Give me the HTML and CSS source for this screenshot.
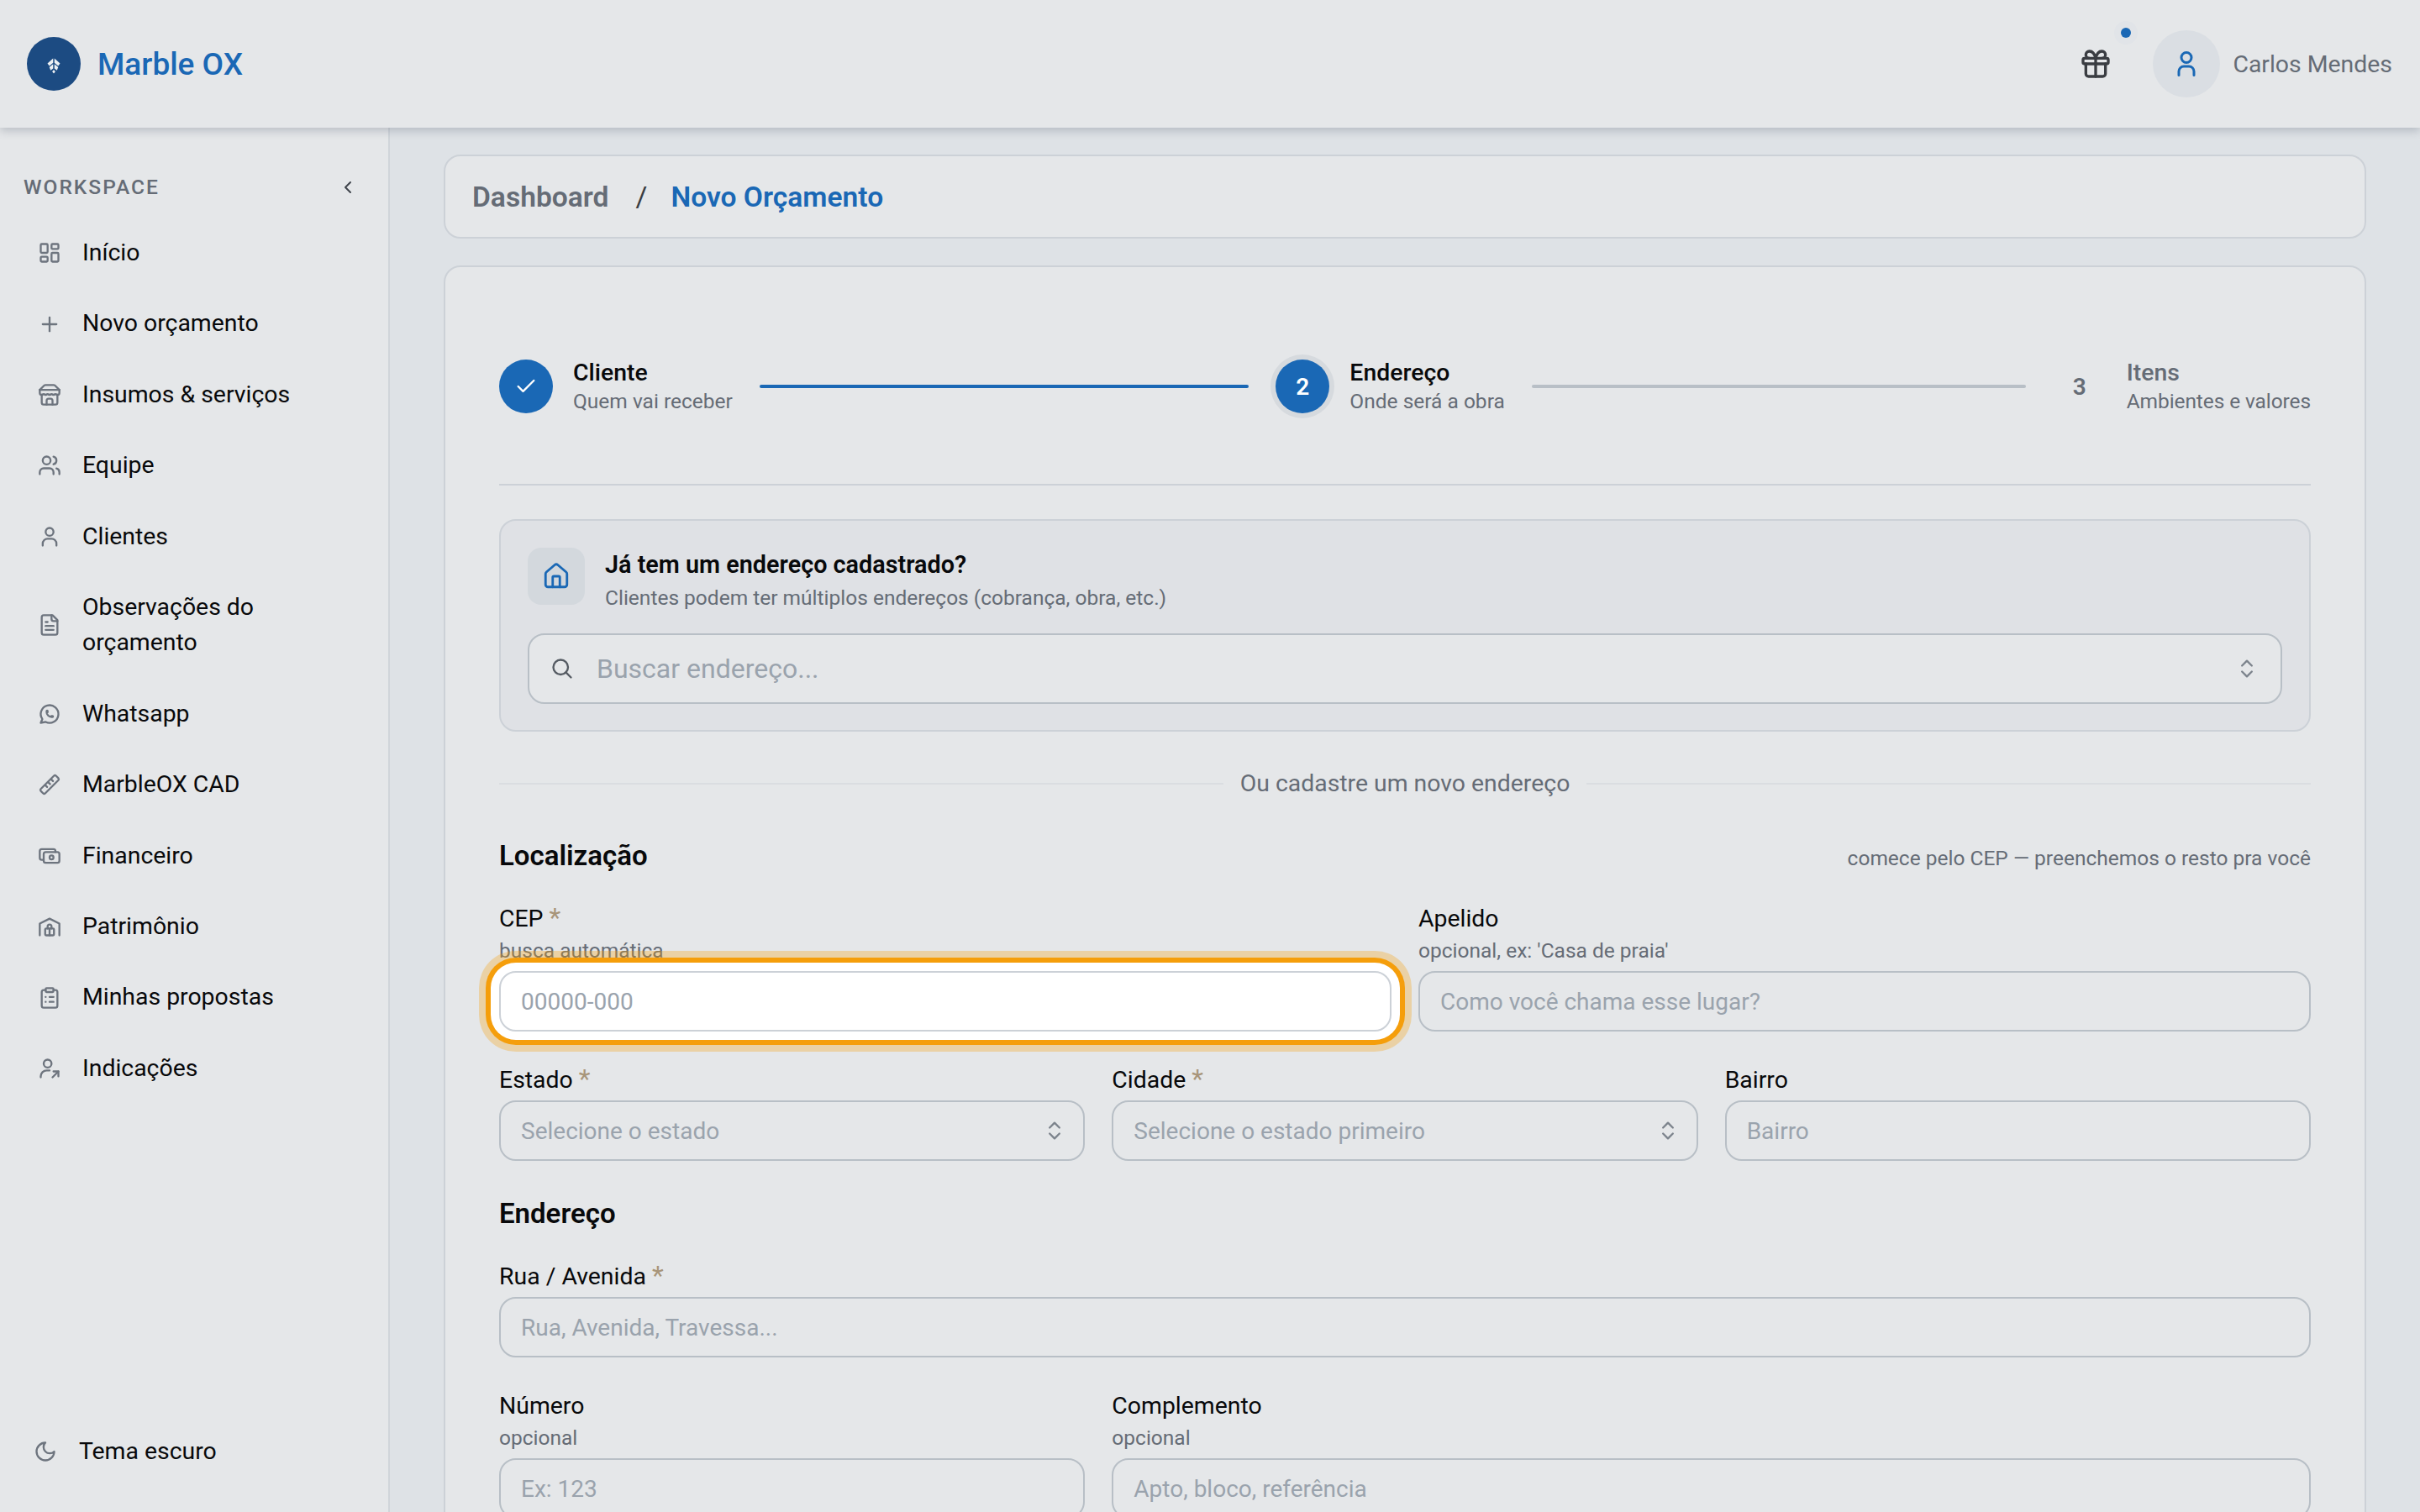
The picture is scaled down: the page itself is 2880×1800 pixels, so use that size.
FILE: index.html
```html
<!doctype html>
<html lang="pt-BR">
<head>
<meta charset="utf-8">
<title>Novo Orçamento - Marble OX</title>
<link rel="stylesheet" href="styles.css">
</head>

<body>
<header class="topbar">
	<div class="brand">
		<span class="brand-logo">
			<svg viewBox="0 0 24 28" fill="#eef1f4"><path d="M11 2 2 10l3 4 6-5Z"/><path d="m13 2 9 8-3 4-6-5Z"/><path d="M11 11l-6 5 2 5 4-3Z"/><path d="m13 11 6 5-2 5-4-3Z"/><path d="m12 20 2.500 3-2.500 3-2.500-3Z"/></svg>
		</span>
		<span class="brand-name">Marble OX</span>
	</div>
	<div class="topbar-right">
		<span class="gift">
			<svg class="icon" viewBox="0 0 24 24"><rect x="3" y="8" width="18" height="4" rx="1"/><path d="M12 8v13"/><path d="M19 12v7a2 2 0 0 1-2 2H7a2 2 0 0 1-2-2v-7"/><path d="M7.5 8a2.5 2.5 0 0 1 0-5A4.8 8 0 0 1 12 8a4.8 8 0 0 1 4.5-5 2.5 2.5 0 0 1 0 5"/></svg>
			<i class="gift-dot"></i>
		</span>
		<span class="avatar">
			<svg class="icon" viewBox="0 0 24 24"><circle cx="12" cy="7" r="4"/><path d="M6 21v-3a4 4 0 0 1 4-4h4a4 4 0 0 1 4 4v3"/></svg>
		</span>
		<span class="user-name">Carlos Mendes</span>
	</div>
</header>

<div class="layout">
	<aside class="sidebar">
		<div class="side-head">
			<span class="side-title">WORKSPACE</span>
			<svg class="icon" viewBox="0 0 24 24"><path d="m15 18-6-6 6-6"/></svg>
		</div>
		<nav class="side-nav">
			<a class="nav-item"><svg class="icon" viewBox="0 0 24 24"><rect x="3" y="3" width="7" height="9" rx="1"/><rect x="14" y="3" width="7" height="5" rx="1"/><rect x="14" y="12" width="7" height="9" rx="1"/><rect x="3" y="16" width="7" height="5" rx="1"/></svg>Início</a>
			<a class="nav-item"><svg class="icon" viewBox="0 0 24 24"><path d="M5 12h14"/><path d="M12 5v14"/></svg>Novo orçamento</a>
			<a class="nav-item"><svg class="icon" viewBox="0 0 24 24"><path d="m2 7 4.41-4.41A2 2 0 0 1 7.83 2h8.34a2 2 0 0 1 1.42.59L22 7"/><path d="M4 12v8a2 2 0 0 0 2 2h12a2 2 0 0 0 2-2v-8"/><path d="M15 22v-4a2 2 0 0 0-2-2h-2a2 2 0 0 0-2 2v4"/><path d="M2 7h20"/><path d="M22 7v3a2 2 0 0 1-2 2 2.7 2.7 0 0 1-1.59-.63.7.7 0 0 0-.82 0A2.7 2.7 0 0 1 16 12a2.7 2.7 0 0 1-1.59-.63.7.7 0 0 0-.82 0A2.7 2.7 0 0 1 12 12a2.7 2.7 0 0 1-1.59-.63.7.7 0 0 0-.82 0A2.7 2.7 0 0 1 8 12a2.7 2.7 0 0 1-1.59-.63.7.7 0 0 0-.82 0A2.7 2.7 0 0 1 4 12a2 2 0 0 1-2-2V7"/></svg>Insumos &amp; serviços</a>
			<a class="nav-item"><svg class="icon" viewBox="0 0 24 24"><path d="M16 21v-2a4 4 0 0 0-4-4H6a4 4 0 0 0-4 4v2"/><circle cx="9" cy="7" r="4"/><path d="M22 21v-2a4 4 0 0 0-3-3.87"/><path d="M16 3.13a4 4 0 0 1 0 7.75"/></svg>Equipe</a>
			<a class="nav-item"><svg class="icon" viewBox="0 0 24 24"><circle cx="12" cy="7" r="4"/><path d="M5 21v-2a5 5 0 0 1 5-5h4a5 5 0 0 1 5 5v2"/></svg>Clientes</a>
			<a class="nav-item"><svg class="icon" viewBox="0 0 24 24"><path d="M15 2H6a2 2 0 0 0-2 2v16a2 2 0 0 0 2 2h12a2 2 0 0 0 2-2V7Z"/><path d="M14 2v4a2 2 0 0 0 2 2h4"/><path d="M16 13H8"/><path d="M16 17H8"/><path d="M10 9H8"/></svg>Observações do orçamento</a>
			<a class="nav-item"><svg class="icon" viewBox="0 0 24 24"><path d="m3 21 1.65-3.8a9 9 0 1 1 3.4 2.9L3 21"/><path d="M9 10a.5.5 0 0 0 1 0V9a.5.5 0 0 0-1 0v1a5 5 0 0 0 5 5h1a.5.5 0 0 0 0-1h-1a.5.5 0 0 0 0 1"/></svg>Whatsapp</a>
			<a class="nav-item"><svg class="icon" viewBox="0 0 24 24"><path d="M3 16.5 16.5 3a1.5 1.5 0 0 1 2 0L21 5.5a1.5 1.5 0 0 1 0 2L7.5 21a1.5 1.5 0 0 1-2 0L3 18.500a1.5 1.5 0 0 1 0-2Z"/><path d="m7.500 12.500 2 2"/><path d="m10.500 9.500 2 2"/><path d="m13.500 6.500 2 2"/></svg>MarbleOX CAD</a>
			<a class="nav-item"><svg class="icon" viewBox="0 0 24 24"><rect x="6" y="8" width="16" height="11" rx="2"/><circle cx="14" cy="13.500" r="2"/><path d="M18 8V7a2 2 0 0 0-2-2H4a2 2 0 0 0-2 2v7a2 2 0 0 0 2 2h2"/></svg>Financeiro</a>
			<a class="nav-item"><svg class="icon" viewBox="0 0 24 24"><path d="M2 21V9l10-5 10 5v12"/><rect x="7.500" y="14" width="9" height="7" rx="1"/><path d="M10 14v-2a2 2 0 0 1 4 0v2"/><path d="M12 14v7"/></svg>Patrimônio</a>
			<a class="nav-item"><svg class="icon" viewBox="0 0 24 24"><rect x="8" y="2" width="8" height="4" rx="1"/><path d="M16 4h2a2 2 0 0 1 2 2v14a2 2 0 0 1-2 2H6a2 2 0 0 1-2-2V6a2 2 0 0 1 2-2h2"/><path d="M12 11h4"/><path d="M12 16h4"/><path d="M8 11h.01"/><path d="M8 16h.01"/></svg>Minhas propostas</a>
			<a class="nav-item"><svg class="icon" viewBox="0 0 24 24"><circle cx="10" cy="7" r="4"/><path d="M3 21v-1a6 6 0 0 1 6-6h3"/><path d="m15 21 6-6"/><path d="M16 15h5v5"/></svg>Indicações</a>
		</nav>
		<a class="theme-toggle"><svg class="icon" viewBox="0 0 24 24"><path d="M12 3a6 6 0 0 0 9 9 9 9 0 1 1-9-9Z"/></svg>Tema escuro</a>
	</aside>

	<main class="content">
		<div class="crumbs">
			<span class="crumb-link">Dashboard</span>
			<span class="crumb-sep">/</span>
			<span class="crumb-now">Novo Orçamento</span>
		</div>

		<section class="card">
			<div class="stepper">
				<div class="step">
					<span class="step-num done"><svg class="icon" viewBox="0 0 24 24"><path d="M20 6 9 17l-5-5"/></svg></span>
					<div>
						<div class="step-name">Cliente</div>
						<div class="step-sub">Quem vai receber</div>
					</div>
				</div>
				<span class="step-line on"></span>
				<div class="step">
					<span class="step-num now">2</span>
					<div>
						<div class="step-name">Endereço</div>
						<div class="step-sub">Onde será a obra</div>
					</div>
				</div>
				<span class="step-line"></span>
				<div class="step todo">
					<span class="step-num">3</span>
					<div>
						<div class="step-name">Itens</div>
						<div class="step-sub">Ambientes e valores</div>
					</div>
				</div>
			</div>

			<div class="saved">
				<div class="saved-head">
					<span class="saved-icon">
						<svg class="icon" viewBox="0 0 24 24"><path d="M15 21v-8a1 1 0 0 0-1-1h-4a1 1 0 0 0-1 1v8"/><path d="M3 10a2 2 0 0 1 .709-1.528l7-5.999a2 2 0 0 1 2.582 0l7 5.999A2 2 0 0 1 21 10v9a2 2 0 0 1-2 2H5a2 2 0 0 1-2-2z"/></svg>
					</span>
					<div>
						<div class="saved-title">Já tem um endereço cadastrado?</div>
						<div class="saved-sub">Clientes podem ter múltiplos endereços (cobrança, obra, etc.)</div>
					</div>
				</div>
				<div class="search">
					<svg class="icon" viewBox="0 0 24 24"><circle cx="10.500" cy="10.500" r="7.500"/><path d="m21 21-5.200-5.200"/></svg>
					<input class="search-input" type="text" placeholder="Buscar endereço...">
					<svg class="icon updown" viewBox="0 0 24 24"><path d="m7 15 5 5 5-5"/><path d="m7 9 5-5 5 5"/></svg>
				</div>
			</div>

			<div class="or-line"><span>Ou cadastre um novo endereço</span></div>

			<div class="sec-head">
				<h2 class="sec-title">Localização</h2>
				<span class="sec-note">comece pelo CEP — preenchemos o resto pra você</span>
			</div>
			<div class="row row-2">
				<div class="field">
					<label class="field-label">CEP <em>*</em></label>
					<span class="field-hint">busca automática</span>
					<input class="input input-tour" type="text" placeholder="00000-000">
				</div>
				<div class="field">
					<label class="field-label">Apelido</label>
					<span class="field-hint">opcional, ex: 'Casa de praia'</span>
					<input class="input" type="text" placeholder="Como você chama esse lugar?">
				</div>
			</div>
			<div class="row row-3">
				<div class="field">
					<label class="field-label">Estado <em>*</em></label>
					<div class="input select"><span>Selecione o estado</span><svg class="icon updown" viewBox="0 0 24 24"><path d="m7 15 5 5 5-5"/><path d="m7 9 5-5 5 5"/></svg></div>
				</div>
				<div class="field">
					<label class="field-label">Cidade <em>*</em></label>
					<div class="input select"><span>Selecione o estado primeiro</span><svg class="icon updown" viewBox="0 0 24 24"><path d="m7 15 5 5 5-5"/><path d="m7 9 5-5 5 5"/></svg></div>
				</div>
				<div class="field">
					<label class="field-label">Bairro</label>
					<input class="input" type="text" placeholder="Bairro">
				</div>
			</div>

			<div class="sec-head sec-second">
				<h2 class="sec-title">Endereço</h2>
			</div>
			<div class="row">
				<div class="field">
					<label class="field-label">Rua / Avenida <em>*</em></label>
					<input class="input" type="text" placeholder="Rua, Avenida, Travessa...">
				</div>
			</div>
			<div class="row row-3">
				<div class="field">
					<label class="field-label">Número</label>
					<span class="field-hint">opcional</span>
					<input class="input" type="text" placeholder="Ex: 123">
				</div>
				<div class="field span-2">
					<label class="field-label">Complemento</label>
					<span class="field-hint">opcional</span>
					<input class="input" type="text" placeholder="Apto, bloco, referência">
				</div>
			</div>
		</section>
	</main>
</div>
</body>
</html>
```

FILE: styles.css
```css
*{
	margin: 0;
	padding: 0;
	box-sizing: border-box;
}
html,body{
	height: 1800px;
	overflow: hidden;
}
body{
	background-color: #dee2e6;
	color: #08090b;
	font-family: Roboto, "Liberation Sans", sans-serif;
	font-size: 28.400px;
}
.icon{
	width: 28px;
	height: 28px;
	flex: none;
	fill: none;
	stroke: currentColor;
	stroke-width: 2;
	stroke-linecap: round;
	stroke-linejoin: round;
}

/* top bar */
.topbar{
	height: 152px;
	padding: 0 33px 0 32px;
	display: flex;
	align-items: center;
	justify-content: space-between;
	position: relative;
	z-index: 2;
	background-color: #e5e7e9;
	box-shadow: 0 4px 10px rgba(90,100,115,.3);
}
.brand{
	display: flex;
	align-items: center;
	gap: 20px;
}
.brand-logo{
	width: 64px;
	height: 64px;
	padding-top: 4px;
	display: flex;
	align-items: center;
	justify-content: center;
	border-radius: 50%;
	background-color: #1c4b82;
}
.brand-logo svg{
	width: 18px;
	height: 21px;
}
.brand-name{
	color: #1a68b5;
	font-size: 37px;
	font-weight: 500;
}
.topbar-right{
	display: flex;
	align-items: center;
}
.gift{
	width: 40px;
	height: 40px;
	margin-right: 48px;
	position: relative;
	color: #3a3d42;
}
.gift .icon{
	width: 40px;
	height: 40px;
}
.gift-dot{
	width: 12px;
	height: 12px;
	position: absolute;
	top: -23px;
	right: -22px;
	border-radius: 50%;
	background-color: #1a68b5;
	box-shadow: 0 0 0 8px #e1e4e8;
}
.avatar{
	width: 80px;
	height: 80px;
	margin-right: 15px;
	display: flex;
	align-items: center;
	justify-content: center;
	border-radius: 50%;
	background-color: #dadee3;
	color: #1a68b5;
}
.avatar .icon{
	width: 36px;
	height: 36px;
}
.user-name{
	color: #656c76;
}

/* sidebar */
.layout{
	height: 1648px;
	display: flex;
}
.sidebar{
	width: 464px;
	flex: none;
	display: flex;
	flex-direction: column;
	background-color: #e5e7e9;
	border-right: 2px solid #d0d5da;
}
.side-head{
	height: 107px;
	padding: 34px 36px 0 28px;
	display: flex;
	align-items: center;
	justify-content: space-between;
	color: #3f444b;
}
.side-head .icon{
	width: 24px;
	height: 24px;
}
.side-title{
	color: #656c76;
	font-size: 24.500px;
	font-weight: 500;
	letter-spacing: 2px;
}
.nav-item{
	padding: 21px 40px 21px 45px;
	display: flex;
	align-items: center;
	gap: 25px;
	line-height: 42.400px;
}
.nav-item .icon{
	color: #6d747e;
}
.theme-toggle{
	margin-top: auto;
	padding: 21px 40px 51px 40px;
	display: flex;
	align-items: center;
	gap: 26px;
	line-height: 42px;
}
.theme-toggle .icon{
	color: #6d747e;
}

/* page */
.content{
	flex: 1;
	padding: 32px 64px 0;
	min-width: 0;
}
.crumbs{
	height: 100px;
	padding: 0 32px;
	display: flex;
	align-items: center;
	border: 2px solid #ccd1d7;
	border-radius: 20px;
	background-color: #e5e7e9;
	font-size: 33.600px;
	font-weight: 600;
}
.crumb-link{
	color: #656c76;
}
.crumb-sep{
	margin: 0 28px 0 32px;
	color: #3a3d42;
	font-weight: 400;
}
.crumb-now{
	color: #1a68b5;
}
.card{
	margin-top: 32px;
	padding: 0 64px 64px;
	border: 2px solid #ccd1d7;
	border-radius: 20px;
	background-color: #e5e7e9;
}

/* stepper */
.stepper{
	padding: 108px 0 82px;
	display: flex;
	align-items: center;
	gap: 32px;
	border-bottom: 2px solid #ccd1d7;
}
.step{
	display: flex;
	align-items: center;
	gap: 24px;
}
.step-num{
	width: 64px;
	height: 64px;
	display: flex;
	align-items: center;
	justify-content: center;
	border-radius: 50%;
	font-size: 28px;
	font-weight: 600;
}
.step-num.done,
.step-num.now{
	background-color: #1a68b5;
	color: #fff;
}
.step-num.now{
	box-shadow: 0 0 0 6px #d6dade;
}
.step-name{
	font-weight: 500;
	line-height: 36px;
}
.step-sub{
	color: #656c76;
	font-size: 24.500px;
	line-height: 32px;
}
.todo .step-name,
.todo .step-num{
	color: #656c76;
}
.todo .step-sub{
	letter-spacing: -.1px;
}
.step-line{
	flex: 320 1 0;
	height: 4px;
	border-radius: 2px;
	background-color: #b8bfc6;
}
.step-line.on{
	flex: 317 1 0;
	background-color: #1a68b5;
}

/* saved address */
.saved{
	margin-top: 40px;
	padding: 32px 32px 31px;
	border: 2px solid #ccd1d7;
	border-radius: 20px;
	background-color: #dfe1e5;
}
.saved-head{
	display: flex;
	align-items: flex-start;
	gap: 24px;
}
.saved-icon{
	width: 68px;
	height: 68px;
	display: flex;
	align-items: center;
	justify-content: center;
	border-radius: 16px;
	background-color: #d3d8dd;
	color: #1a68b5;
}
.saved-icon .icon{
	width: 34px;
	height: 34px;
}
.saved-title{
	font-size: 28.800px;
	font-weight: 600;
	line-height: 40px;
}
.saved-sub{
	color: #656c76;
	font-size: 24.500px;
	line-height: 40px;
}
.search{
	height: 84px;
	margin-top: 22px;
	padding: 0 26px 0 25px;
	display: flex;
	align-items: center;
	border: 2px solid #b8bfc6;
	border-radius: 20px;
	background-color: #e5e7e9;
	color: #555b63;
}
.search .icon{
	width: 28px;
	height: 28px;
}
.search-input{
	flex: 1;
	min-width: 0;
	margin: 0 24px 0 27px;
	border: 0;
	outline: 0;
	background: transparent;
	font: 400 32px Roboto, "Liberation Sans", sans-serif;
}
.search-input::placeholder,
.input::placeholder{
	color: #9aa3ad;
	opacity: 1;
}
.updown{
	color: #7c838c;
}

.or-line{
	margin-top: 42px;
	display: flex;
	align-items: center;
	gap: 20px;
	color: #656c76;
	line-height: 40px;
}
.or-line::before,
.or-line::after{
	content: "";
	flex: 1;
	height: 2px;
	background-color: #dadde1;
}

/* form */
.sec-head{
	margin-top: 44px;
	display: flex;
	align-items: baseline;
	justify-content: space-between;
}
.sec-title{
	font-size: 33px;
	font-weight: 600;
	line-height: 44px;
}
.sec-note{
	color: #656c76;
	font-size: 24.500px;
}
.sec-second{
	margin-top: 41px;
}
.row{
	margin-top: 36px;
	display: grid;
	gap: 32px;
}
.sec-head + .row{
	margin-top: 31px;
}
.row-2{
	grid-template-columns: 1fr 1fr;
}
.row-3{
	grid-template-columns: 1fr 1fr 1fr;
}
.span-2{
	grid-column: span 2;
}
.field{
	display: flex;
	flex-direction: column;
	min-width: 0;
}
.field-label{
	margin-bottom: 2px;
	font-weight: 400;
	line-height: 44px;
}
.field-label em{
	color: #a8957a;
	font-size: 32px;
	font-style: normal;
	line-height: 0;
}
.field-hint{
	margin: -4px 0 6px;
	color: #656c76;
	font-size: 24.500px;
	line-height: 36px;
}
.input{
	width: 100%;
	height: 72px;
	padding: 0 24px;
	display: flex;
	align-items: center;
	border: 2px solid #b8bfc6;
	border-radius: 20px;
	outline: 0;
	background-color: #e5e7e9;
	color: #9aa3ad;
	font: 400 28px Roboto, "Liberation Sans", sans-serif;
}
.select{
	padding-right: 20px;
	justify-content: space-between;
}
.input-tour{
	position: relative;
	border-color: #ccd1d7;
	background-color: #fff;
	box-shadow: 0 0 0 10px #fff, 0 0 0 16px #f59e0b, 0 0 0 24px rgba(245,158,11,.3);
}
```
